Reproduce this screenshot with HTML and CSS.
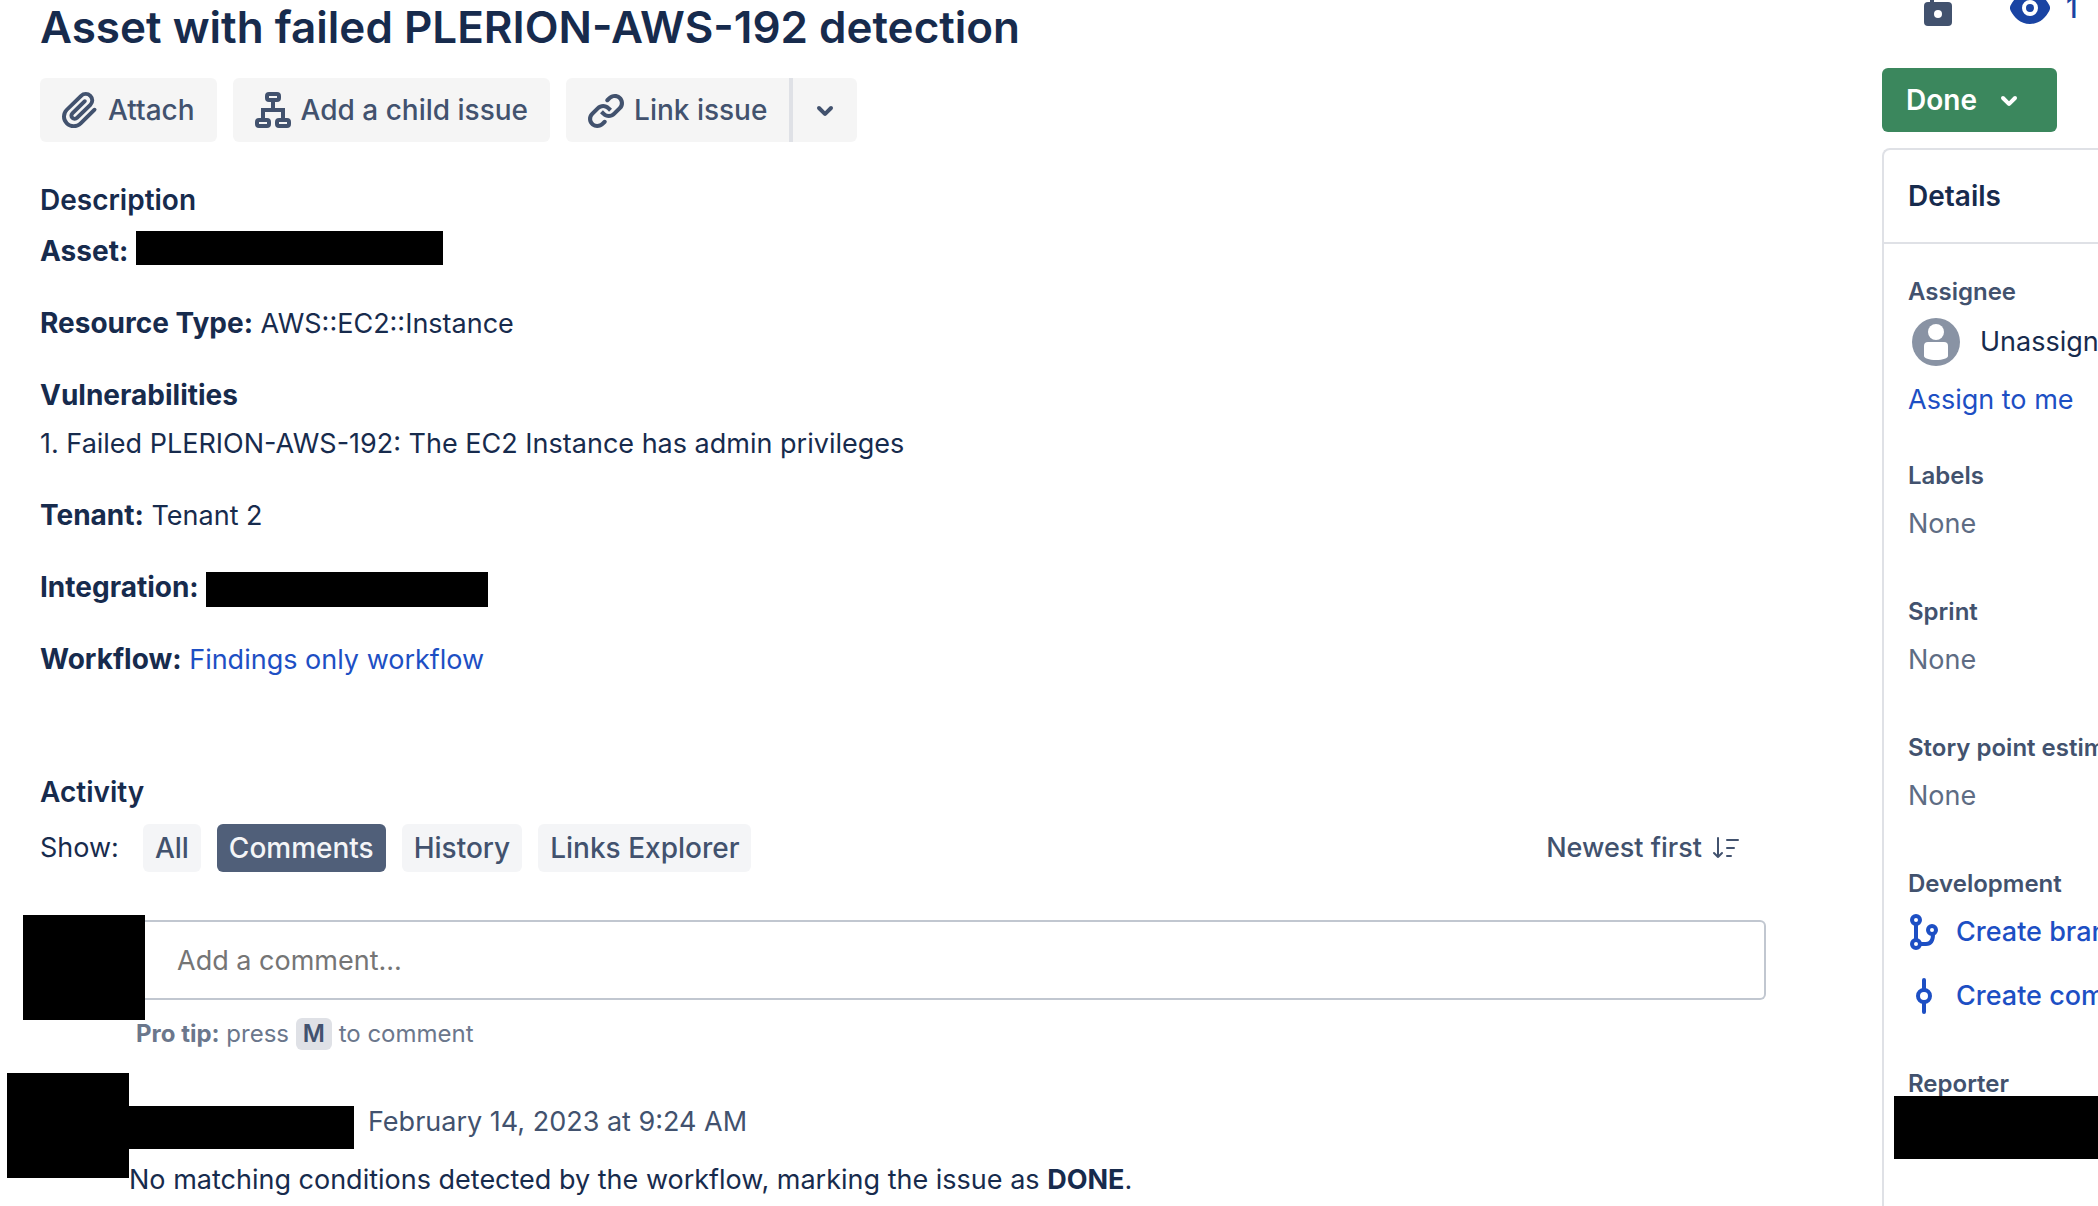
FILE: index.html
```html
<!DOCTYPE html>
<html lang="en">
<head>
    <meta charset="UTF-8">
    <title>Asset with failed PLERION-AWS-192 detection</title>
    <link rel="stylesheet" href="styles.css">
</head>
<body>
    <main class="issue">
        <h1 class="title">Asset with failed PLERION-AWS-192 detection</h1>
        <div class="actions">
            <button class="btn" type="button">
                <svg class="icon" viewBox="0 0 24 24" aria-hidden="true"><path d="M11.643 17.965c-1.53 1.495-4.016 1.496-5.542.004a3.773 3.773 0 01.002-5.412l7.147-6.985a2.316 2.316 0 013.233-.003c.893.873.895 2.282.004 3.153l-6.703 6.55a.653.653 0 01-.914-.008.62.62 0 010-.902l6.229-6.087a.941.941 0 000-1.353.995.995 0 00-1.384 0l-6.23 6.087a2.502 2.502 0 000 3.607 2.643 2.643 0 003.683.009l6.703-6.55a4.074 4.074 0 00-.003-5.859 4.306 4.306 0 00-6.002.003l-7.148 6.985a5.655 5.655 0 00-.001 8.118c2.29 2.237 6.015 2.238 8.308-.004l6.942-6.783a.94.94 0 000-1.353.995.995 0 00-1.384 0l-6.94 6.783z"/></svg>
                Attach
            </button>
            <button class="btn" type="button">
                <svg class="icon line" viewBox="0 0 48 48" aria-hidden="true">
                    <rect x="18" y="8" width="12" height="6" rx="2"/>
                    <rect x="8" y="34" width="12" height="6" rx="2"/>
                    <rect x="28" y="34" width="12" height="6" rx="2"/>
                    <path d="M24 14v10M14 34V24h20v10"/>
                </svg>
                Add a child issue
            </button>
            <div class="split">
                <button class="btn" type="button">
                    <svg class="icon" viewBox="0 0 24 24" aria-hidden="true"><path d="M12.856 5.457l-.937.92a1.002 1.002 0 000 1.437 1.047 1.047 0 001.463 0l.984-.966c.967-.95 2.542-1.135 3.602-.288a2.54 2.54 0 01.203 3.81l-2.903 2.852a2.646 2.646 0 01-3.696 0l-1.11-1.09L9 13.57l1.108 1.089c1.822 1.788 4.802 1.788 6.622 0l2.905-2.852a4.558 4.558 0 00-.357-6.82c-1.893-1.517-4.695-1.226-6.422.47"/><path d="M11.144 19.543l.937-.92a1.002 1.002 0 000-1.437 1.047 1.047 0 00-1.462 0l-.985.966c-.967.95-2.542 1.135-3.602.288a2.54 2.54 0 01-.203-3.81l2.903-2.852a2.646 2.646 0 013.696 0l1.11 1.09L15 11.43l-1.108-1.089c-1.822-1.788-4.802-1.788-6.622 0l-2.905 2.852a4.558 4.558 0 00.357 6.82c1.893 1.517 4.695 1.226 6.422-.47"/></svg>
                    Link issue
                </button>
                <button class="btn more" type="button" aria-label="More link options">
                    <svg class="icon" viewBox="0 0 24 24" aria-hidden="true"><path d="M8.292 10.293a1.009 1.009 0 000 1.419l2.939 2.965c.218.215.5.322.779.322s.556-.107.769-.322l2.93-2.955a1.01 1.01 0 000-1.419.987.987 0 00-1.406 0l-2.298 2.317-2.307-2.327a.99.99 0 00-1.406 0z"/></svg>
                </button>
            </div>
        </div>

        <section class="description">
            <h2>Description</h2>
            <p><b>Asset:</b> <span class="redact redact-asset"></span></p>
            <p><b>Resource Type:</b> AWS::EC2::Instance</p>
            <p><b>Vulnerabilities</b><br>1. Failed PLERION-AWS-192: The EC2 Instance has admin privileges</p>
            <p><b>Tenant:</b> Tenant 2</p>
            <p><b>Integration:</b> <span class="redact redact-integration"></span></p>
            <p><b>Workflow:</b> <a href="#">Findings only workflow</a></p>
        </section>

        <section class="activity">
            <h2>Activity</h2>
            <div class="filters">
                <span class="show">Show:</span>
                <button class="chip" type="button">All</button>
                <button class="chip selected" type="button">Comments</button>
                <button class="chip" type="button">History</button>
                <button class="chip" type="button">Links Explorer</button>
                <button class="sort" type="button">
                    Newest first
                    <svg class="sort-icon" viewBox="0 0 28 24" aria-hidden="true"><path d="M6 2v19M2 17l4 4 4-4M15 4h11M15 12h7M15 20h4"/></svg>
                </button>
            </div>
            <div class="composer">
                <span class="redact avatar-block"></span>
                <input class="comment-input" type="text" placeholder="Add a comment..." aria-label="Add a comment">
            </div>
            <p class="tip"><b>Pro tip:</b> press <kbd>M</kbd> to comment</p>
            <article class="comment">
                <span class="redact avatar-block"></span>
                <div class="comment-body">
                    <div class="comment-head">
                        <span class="redact redact-author"></span>
                        <time datetime="2023-02-14T09:24">February 14, 2023 at 9:24 AM</time>
                    </div>
                    <p>No matching conditions detected by the workflow, marking the issue as <b>DONE</b>.</p>
                </div>
            </article>
        </section>
    </main>

    <aside class="sidebar">
        <div class="tools">
            <button class="tool" type="button" aria-label="Restrict access">
                <svg width="28" height="26" viewBox="0 0 28 26" aria-hidden="true">
                    <path d="M6 0h4v4H6z"/>
                    <rect y="2" width="28" height="24" rx="4"/>
                    <circle class="hole" cx="14" cy="14" r="4"/>
                </svg>
            </button>
            <button class="tool watch" type="button" aria-label="Watchers">
                <svg width="40" height="24" viewBox="0 0 40 24" aria-hidden="true">
                    <path d="M20-8C10-8 4-1 .8 5a6 6 0 000 6C4 17 10 24 20 24s16-7 19.200-13a6 6 0 000-6C36-1 30-8 20-8z"/>
                    <circle class="ring" cx="20" cy="8" r="6"/>
                </svg>
                1
            </button>
        </div>
        <button class="status" type="button">
            Done
            <svg class="icon" viewBox="0 0 24 24" aria-hidden="true"><path d="M8.292 10.293a1.009 1.009 0 000 1.419l2.939 2.965c.218.215.5.322.779.322s.556-.107.769-.322l2.93-2.955a1.01 1.01 0 000-1.419.987.987 0 00-1.406 0l-2.298 2.317-2.307-2.327a.99.99 0 00-1.406 0z"/></svg>
        </button>
        <div class="details">
            <h2>Details</h2>
            <div class="fields">
                <div class="field assignee">
                    <h3>Assignee</h3>
                    <div class="person">
                        <svg class="icon" viewBox="0 0 48 48" aria-hidden="true">
                            <circle class="face" cx="24" cy="24" r="24"/>
                            <circle class="hole" cx="24" cy="14" r="8"/>
                            <path class="hole" d="M16 24h16a4 4 0 014 4v10c0 2-5 4-12 4s-12-2-12-4V28a4 4 0 014-4z"/>
                        </svg>
                        Unassigned
                    </div>
                    <a href="#">Assign to me</a>
                </div>
                <div class="field">
                    <h3>Labels</h3>
                    <p>None</p>
                </div>
                <div class="field">
                    <h3>Sprint</h3>
                    <p>None</p>
                </div>
                <div class="field">
                    <h3>Story point estimate</h3>
                    <p>None</p>
                </div>
                <div class="field dev">
                    <h3>Development</h3>
                    <a href="#">
                        <svg class="line" width="32" height="48" viewBox="8 0 32 48" aria-hidden="true">
                            <circle cx="16" cy="12" r="4"/>
                            <circle cx="16" cy="36" r="4"/>
                            <circle cx="32" cy="22" r="4"/>
                            <path d="M16 16v16M20 36h6c4 0 7-3 7-10"/>
                        </svg>
                        Create branch
                    </a>
                    <a href="#">
                        <svg class="line" width="32" height="48" viewBox="8 0 32 48" aria-hidden="true">
                            <circle cx="24" cy="24" r="6"/>
                            <path d="M24 8v10M24 30v10"/>
                        </svg>
                        Create commit
                    </a>
                </div>
                <div class="field">
                    <h3>Reporter</h3>
                    <div class="redact redact-reporter"></div>
                </div>
            </div>
        </div>
    </aside>
</body>
</html>
```

FILE: styles.css
```css
*{
    box-sizing: border-box;
}
body{
    display: flex;
    min-height: 100vh;
    margin: 0;
    overflow: hidden;
    background: #fff;
    color: #172b4d;
    font: 27px/48px Inter, "Liberation Sans", sans-serif;
}
h1, h2, h3, p{
    margin: 0;
}
h2{
    font-size: 28px;
    font-weight: 600;
}
p b{
    font-size: 28px;
    line-height: 1;
}
button{
    border: 0;
    font: inherit;
    font-size: 28px;
    font-weight: 500;
    color: #42526e;
    white-space: nowrap;
    cursor: pointer;
}
a{
    color: #1d4fc4;
    text-decoration: none;
}
svg{
    flex: none;
    fill: currentColor;
}
.icon{
    width: 48px;
    height: 48px;
}
.line{
    fill: none;
    stroke: currentColor;
    stroke-width: 4;
    stroke-linecap: round;
}
.hole{
    fill: #fff;
}
.redact{
    display: inline-block;
    flex: none;
    background: #000;
}

/* main column */
.issue{
    flex: 1;
    min-width: 0;
    padding-right: 116px;
}
.title{
    padding-left: 40px;
    font-size: 44px;
    font-weight: 600;
    line-height: 54px;
}
.actions{
    display: flex;
    gap: 16px;
    padding: 24px 0 0 40px;
}
.btn{
    display: flex;
    align-items: center;
    gap: 4px;
    height: 64px;
    padding: 0 22px 0 16px;
    border-radius: 6px;
    background: #f5f5f5;
}
.split{
    display: flex;
}
.split .btn:first-child{
    border-radius: 6px 0 0 6px;
}
.split .more{
    padding: 0 8px;
    border-left: 4px solid #dfe1e6;
    border-radius: 0 6px 6px 0;
}
.description{
    padding: 34px 0 0 40px;
}
.description h2{
    margin-bottom: 4px;
}
.description p{
    margin-bottom: 24px;
}
.redact-asset{
    width: 307px;
    height: 34px;
    vertical-align: -4px;
}
.redact-integration{
    width: 282px;
    height: 35px;
    vertical-align: -10px;
}

/* activity */
.activity{
    padding-top: 60px;
}
.activity h2{
    padding-left: 40px;
}
.filters{
    display: flex;
    gap: 16px;
    padding: 8px 26px 0 40px;
}
.show{
    margin-right: 8px;
}
.chip{
    height: 48px;
    padding: 0 12px;
    border-radius: 6px;
    background: #f4f5f7;
}
.selected{
    background: #505f79;
    color: #f4f5f7;
}
.sort{
    display: flex;
    align-items: center;
    gap: 10px;
    margin-left: auto;
    padding: 0;
    background: none;
    font-size: 27px;
}
.sort-icon{
    width: 28px;
    height: 24px;
    fill: none;
    stroke: currentColor;
    stroke-width: 2;
    stroke-linecap: round;
    stroke-linejoin: round;
}
.composer{
    display: flex;
    align-items: flex-start;
    padding: 43px 0 0 23px;
}
.avatar-block{
    width: 122px;
    height: 105px;
}
.comment-input{
    flex: 1;
    min-width: 0;
    height: 80px;
    margin-top: 5px;
    padding: 0 32px;
    border: 2px solid #c1c7d0;
    border-left: 0;
    border-radius: 0 6px 6px 0;
    background: #fff;
    color: inherit;
    font: inherit;
}
.comment-input::placeholder{
    color: #757575;
}
.tip{
    margin-top: -2px;
    padding-left: 136px;
    color: #6b778c;
    font-size: 24px;
    line-height: 32px;
}
.tip b{
    font-size: inherit;
}
kbd{
    display: inline-block;
    padding: 0 7px;
    border-radius: 6px;
    background: #dfe1e6;
    color: #42526e;
    font: inherit;
    font-weight: 600;
}
.comment{
    display: flex;
    align-items: flex-start;
    padding: 23px 0 0 7px;
}
.comment-body{
    flex: 1;
    min-width: 0;
    padding-top: 33px;
}
.comment-head{
    display: flex;
    gap: 14px;
    height: 43px;
    margin-bottom: 7px;
    color: #42526e;
    line-height: 32px;
}
.comment b{
    font-size: inherit;
}
.redact-author{
    width: 225px;
    height: 43px;
}

/* right column */
.sidebar{
    flex: none;
    display: flex;
    flex-direction: column;
    align-items: flex-start;
    width: 216px;
    white-space: nowrap;
}
.tools{
    display: flex;
    align-items: flex-start;
    gap: 58px;
    height: 68px;
    padding-left: 42px;
}
.tool{
    display: flex;
    align-items: flex-start;
    gap: 16px;
    padding: 0;
    background: none;
    line-height: 16px;
}
.watch{
    color: #1a44a3;
}
.ring{
    fill: none;
    stroke: #fff;
    stroke-width: 4;
}
.status{
    display: flex;
    align-items: center;
    gap: 8px;
    height: 64px;
    padding: 0 24px;
    border-radius: 6px;
    background: #3b875d;
    color: #fff;
    font-weight: 600;
}
.details{
    flex: 1;
    width: 100%;
    margin-top: 16px;
    border: solid #dfe1e6;
    border-width: 2px 0 0 2px;
    border-radius: 8px 0 0 0;
}
.details h2{
    padding: 22px 24px;
    border-bottom: 2px solid #dfe1e6;
}
.fields{
    padding: 32px 0 0 24px;
}
.field{
    margin-bottom: 48px;
    color: #5e6c84;
}
.field:last-child{
    margin-bottom: 0;
}
.field h3{
    color: #42526e;
    font-size: 24px;
    font-weight: 600;
    line-height: 32px;
}
.field p{
    margin-top: 8px;
}
.assignee{
    margin-bottom: 36px;
}
.person{
    display: flex;
    align-items: center;
    gap: 20px;
    margin: 10px 0 10px 4px;
    color: #172b4d;
}
.face{
    fill: #8993a4;
}
.dev{
    margin-bottom: 40px;
}
.dev a{
    display: flex;
    align-items: center;
    gap: 16px;
    height: 64px;
    font-weight: 500;
}
/* covers the descender of the heading above */
.redact-reporter{
    position: relative;
    display: block;
    height: 63px;
    margin: -4px 0 0 -14px;
}
```
